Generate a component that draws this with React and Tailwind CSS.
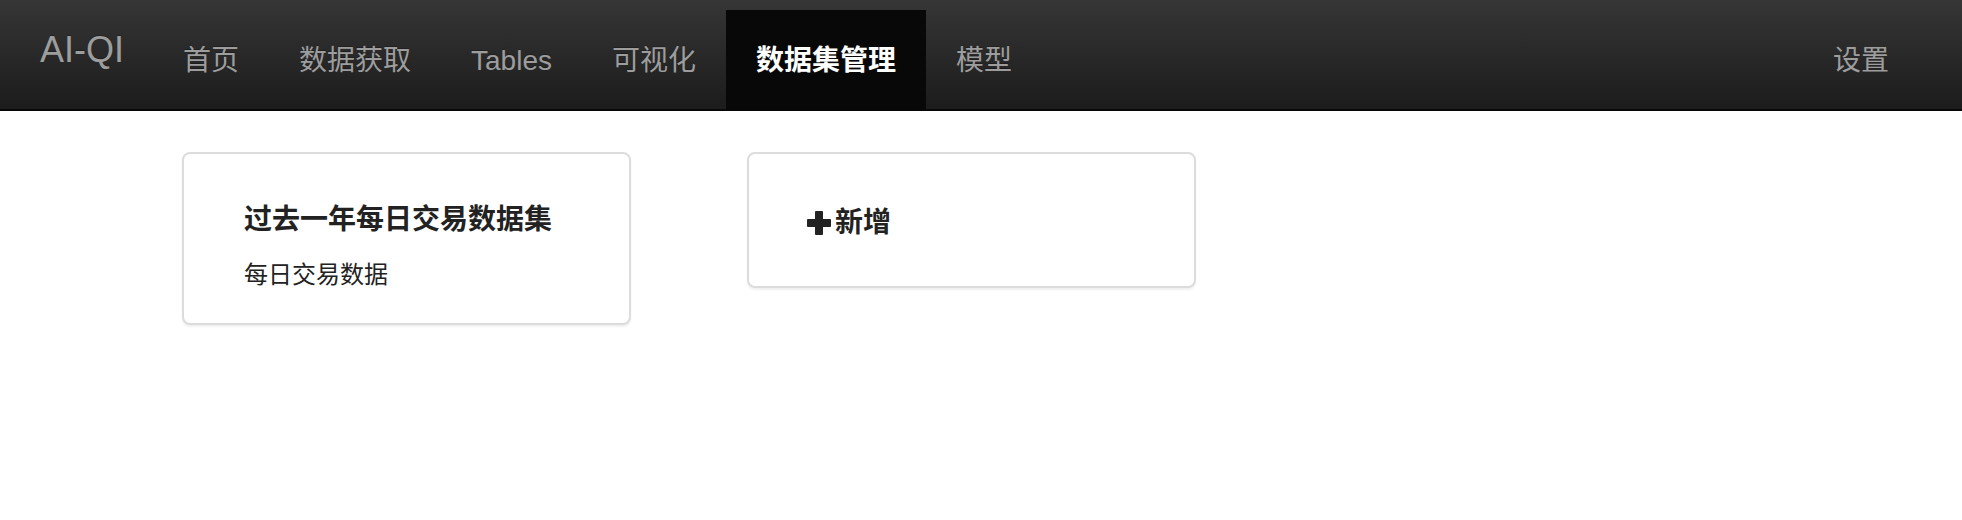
import React from 'react';

const navItems = ['首页', '数据获取', 'Tables', '可视化', '数据集管理', '模型'];

const PlusIcon = () => (
  <svg width="24" height="24" viewBox="0 0 24 24" className="mr-[4px]">
    <rect x="8" y="0" width="8" height="24" rx="1" fill="#222" />
    <rect x="0" y="8" width="24" height="8" rx="1" fill="#222" />
  </svg>
);

const App = () => {
  const active = '数据集管理';

  return (
    <div className="min-h-[520px] bg-white font-['Liberation_Sans','Noto_Sans_CJK_SC',sans-serif] text-[#333]">
      {/* Top navbar */}
      <header className="flex h-[111px] items-start justify-between border-b-2 border-[#080808] bg-gradient-to-b from-[#363636] to-[#1c1c1c]">
        <div className="flex items-start">
          <a className="ml-[10px] flex h-[100px] items-center px-[30px] text-[36px] leading-none text-[#9d9d9d] [text-shadow:0_-1px_0_rgba(0,0,0,0.25)]">
            AI-QI
          </a>
          <nav className="ml-[-1px] mt-[10px] flex">
            {navItems.map(item => (
              <a
                key={item}
                className={
                  item === active
                    ? 'flex h-[99px] items-center bg-[#080808] px-[30px] pt-[2px] text-[28px] font-bold text-white'
                    : 'flex h-[99px] items-center px-[30px] pt-[2px] text-[28px] text-[#9d9d9d] [text-shadow:0_-1px_0_rgba(0,0,0,0.25)]'
                }
              >
                {item}
              </a>
            ))}
          </nav>
        </div>
        <a className="mr-[43px] mt-[10px] flex h-[99px] items-center px-[30px] pt-[2px] text-[28px] text-[#9d9d9d]">
          设置
        </a>
      </header>

      {/* Dataset cards */}
      <main className="flex items-start gap-[116px] pl-[182px] pt-[41px]">
        <div className="w-[449px] rounded-[8px] border-2 border-[#dcdcdc] bg-white px-[60px] pb-[31px] pt-[46px] shadow-[0_2px_2px_rgba(0,0,0,0.06)]">
          <h3 className="text-[28px] font-bold leading-[40px] text-[#222]">过去一年每日交易数据集</h3>
          <p className="mt-[18px] text-[24px] leading-[34px] text-[#222]">每日交易数据</p>
        </div>
        <div className="w-[449px] rounded-[8px] border-2 border-[#dcdcdc] bg-white px-[58px] pb-[43px] pt-[49px] shadow-[0_2px_2px_rgba(0,0,0,0.06)]">
          <h3 className="flex items-center text-[28px] font-bold leading-[40px] text-[#222]">
            <PlusIcon />
            新增
          </h3>
        </div>
      </main>
    </div>
  );
};

export default App;
